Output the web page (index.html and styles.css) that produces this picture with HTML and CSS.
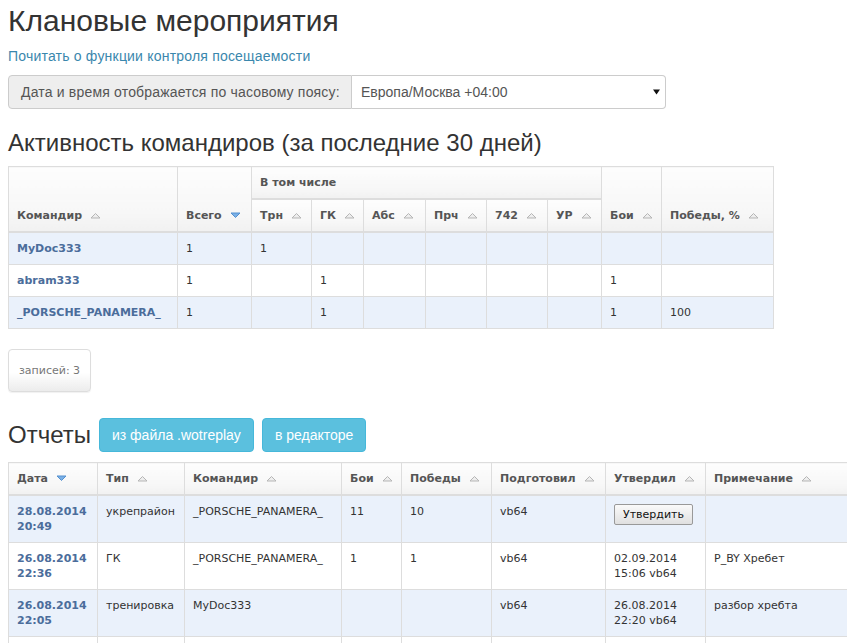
FILE: index.html
```html
<!DOCTYPE html>
<html lang="ru">
<head>
<meta charset="utf-8">
<title>Клановые мероприятия</title>
<link rel="stylesheet" href="styles.css">
</head>
<body>
<h1 class="title">Клановые мероприятия</h1>
<a class="help-link" href="#">Почитать о функции контроля посещаемости</a>

<div class="tz-group">
  <span class="tz-label">Дата и время отображается по часовому поясу:</span>
  <div class="tz-select">
    <span>Европа/Москва +04:00</span>
    <svg class="caret" width="7" height="6" viewBox="0 0 7 6"><path d="M0 0.5 H7 L3.5 5.5 Z" fill="#111"/></svg>
  </div>
</div>

<h2 class="section-title">Активность командиров (за последние 30 дней)</h2>

<table class="grid grid-activity">
  <colgroup>
    <col class="w169"><col class="w74"><col class="w60"><col class="w52"><col class="w62"><col class="w61"><col class="w61"><col class="w54"><col class="w60"><col class="w112">
  </colgroup>
  <thead>
    <tr>
      <th rowspan="2">Командир<svg class="sort" width="11" height="7" viewBox="0 0 11 7"><path d="M1 6 L5.5 1.5 L10 6 Z" fill="#eee" stroke="#b5b5b5"/></svg></th>
      <th rowspan="2">Всего<svg class="sort" width="11" height="7" viewBox="0 0 11 7"><path d="M1 1 L5.5 5.5 L10 1 Z" fill="#7ab0e6" stroke="#5590cf"/></svg></th>
      <th colspan="6" class="group">В том числе</th>
      <th rowspan="2">Бои<svg class="sort" width="11" height="7" viewBox="0 0 11 7"><path d="M1 6 L5.5 1.5 L10 6 Z" fill="#eee" stroke="#b5b5b5"/></svg></th>
      <th rowspan="2">Победы, %<svg class="sort" width="11" height="7" viewBox="0 0 11 7"><path d="M1 6 L5.5 1.5 L10 6 Z" fill="#eee" stroke="#b5b5b5"/></svg></th>
    </tr>
    <tr>
      <th>Трн<svg class="sort" width="11" height="7" viewBox="0 0 11 7"><path d="M1 6 L5.5 1.5 L10 6 Z" fill="#eee" stroke="#b5b5b5"/></svg></th>
      <th>ГК<svg class="sort" width="11" height="7" viewBox="0 0 11 7"><path d="M1 6 L5.5 1.5 L10 6 Z" fill="#eee" stroke="#b5b5b5"/></svg></th>
      <th>Абс<svg class="sort" width="11" height="7" viewBox="0 0 11 7"><path d="M1 6 L5.5 1.5 L10 6 Z" fill="#eee" stroke="#b5b5b5"/></svg></th>
      <th>Прч<svg class="sort" width="11" height="7" viewBox="0 0 11 7"><path d="M1 6 L5.5 1.5 L10 6 Z" fill="#eee" stroke="#b5b5b5"/></svg></th>
      <th>742<svg class="sort" width="11" height="7" viewBox="0 0 11 7"><path d="M1 6 L5.5 1.5 L10 6 Z" fill="#eee" stroke="#b5b5b5"/></svg></th>
      <th>УР<svg class="sort" width="11" height="7" viewBox="0 0 11 7"><path d="M1 6 L5.5 1.5 L10 6 Z" fill="#eee" stroke="#b5b5b5"/></svg></th>
    </tr>
  </thead>
  <tbody>
    <tr>
      <td><a class="cmd" href="#">MyDoc333</a></td><td>1</td><td>1</td><td></td><td></td><td></td><td></td><td></td><td></td><td></td>
    </tr>
    <tr>
      <td><a class="cmd" href="#">abram333</a></td><td>1</td><td></td><td>1</td><td></td><td></td><td></td><td></td><td>1</td><td></td>
    </tr>
    <tr>
      <td><a class="cmd" href="#">_PORSCHE_PANAMERA_</a></td><td>1</td><td></td><td>1</td><td></td><td></td><td></td><td></td><td>1</td><td>100</td>
    </tr>
  </tbody>
</table>

<div class="records-row"><span class="records">записей: 3</span></div>

<div class="reports-head">
  <h2 class="section-title inline">Отчеты</h2>
  <a class="btn" href="#">из файла .wotreplay</a>
  <a class="btn" href="#">в редакторе</a>
</div>

<table class="grid grid-reports">
  <colgroup>
    <col class="w89"><col class="w87"><col class="w157"><col class="w60"><col class="w90"><col class="w114"><col class="w100"><col class="w150">
  </colgroup>
  <thead>
    <tr>
      <th>Дата<svg class="sort" width="11" height="7" viewBox="0 0 11 7"><path d="M1 1 L5.5 5.5 L10 1 Z" fill="#7ab0e6" stroke="#5590cf"/></svg></th>
      <th>Тип<svg class="sort" width="11" height="7" viewBox="0 0 11 7"><path d="M1 6 L5.5 1.5 L10 6 Z" fill="#eee" stroke="#b5b5b5"/></svg></th>
      <th>Командир<svg class="sort" width="11" height="7" viewBox="0 0 11 7"><path d="M1 6 L5.5 1.5 L10 6 Z" fill="#eee" stroke="#b5b5b5"/></svg></th>
      <th>Бои<svg class="sort" width="11" height="7" viewBox="0 0 11 7"><path d="M1 6 L5.5 1.5 L10 6 Z" fill="#eee" stroke="#b5b5b5"/></svg></th>
      <th>Победы<svg class="sort" width="11" height="7" viewBox="0 0 11 7"><path d="M1 6 L5.5 1.5 L10 6 Z" fill="#eee" stroke="#b5b5b5"/></svg></th>
      <th>Подготовил<svg class="sort" width="11" height="7" viewBox="0 0 11 7"><path d="M1 6 L5.5 1.5 L10 6 Z" fill="#eee" stroke="#b5b5b5"/></svg></th>
      <th>Утвердил<svg class="sort" width="11" height="7" viewBox="0 0 11 7"><path d="M1 6 L5.5 1.5 L10 6 Z" fill="#eee" stroke="#b5b5b5"/></svg></th>
      <th>Примечание<svg class="sort" width="11" height="7" viewBox="0 0 11 7"><path d="M1 6 L5.5 1.5 L10 6 Z" fill="#eee" stroke="#b5b5b5"/></svg></th>
    </tr>
  </thead>
  <tbody>
    <tr>
      <td><a class="cmd" href="#">28.08.2014<br>20:49</a></td>
      <td>укрепрайон</td>
      <td>_PORSCHE_PANAMERA_</td>
      <td>11</td>
      <td>10</td>
      <td>vb64</td>
      <td><button class="approve" type="button">Утвердить</button></td>
      <td></td>
    </tr>
    <tr>
      <td><a class="cmd" href="#">26.08.2014<br>22:36</a></td>
      <td>ГК</td>
      <td>_PORSCHE_PANAMERA_</td>
      <td>1</td>
      <td>1</td>
      <td>vb64</td>
      <td>02.09.2014<br>15:06 vb64</td>
      <td>P_BY Хребет</td>
    </tr>
    <tr>
      <td><a class="cmd" href="#">26.08.2014<br>22:05</a></td>
      <td>тренировка</td>
      <td>MyDoc333</td>
      <td></td>
      <td></td>
      <td>vb64</td>
      <td>26.08.2014<br>22:20 vb64</td>
      <td>разбор хребта</td>
    </tr>
    <tr class="tail-row">
      <td></td><td></td><td></td><td></td><td></td><td></td><td></td><td></td>
    </tr>
  </tbody>
</table>
</body>
</html>
```

FILE: styles.css
```css
html {
  overflow: hidden;
}

body {
  margin: 0;
  padding: 0 8px;
  background: #fff;
  color: #333;
  font-family: "Liberation Sans", Arial, sans-serif;
}

.title {
  margin: 4px 0 0;
  font-size: 30px;
  font-weight: normal;
  line-height: 33px;
  color: #333;
}

.help-link {
  display: block;
  margin-top: 9px;
  font-size: 14px;
  line-height: 20px;
  letter-spacing: 0.2px;
  color: #3a87ad;
  text-decoration: none;
}

.tz-group {
  display: flex;
  width: 658px;
  height: 34px;
  margin-top: 9px;
  font-size: 14px;
  color: #555;
}

.tz-label {
  box-sizing: border-box;
  width: 344px;
  padding: 0 12px;
  line-height: 32px;
  letter-spacing: 0.18px;
  background: #eee;
  border: 1px solid #ccc;
  border-radius: 4px 0 0 4px;
  white-space: nowrap;
}

.tz-select {
  flex: 1;
  display: flex;
  align-items: center;
  justify-content: space-between;
  padding: 0 5px 0 9px;
  border: 1px solid #ccc;
  border-left: 0;
  border-radius: 0 4px 4px 0;
  background: #fff;
}

.caret {
  display: block;
}

.section-title {
  margin: 21px 0 10px;
  font-size: 24px;
  font-weight: normal;
  line-height: 26px;
  color: #333;
}

.section-title.inline {
  margin: 0;
}

.grid {
  border-collapse: collapse;
  table-layout: fixed;
  font-family: "DejaVu Sans", Verdana, sans-serif;
  font-size: 11px;
  line-height: 15px;
}

.grid-activity {
  width: 765px;
}

.grid-reports {
  width: 847px;
  margin-top: 10px;
}

.w169 { width: 169px; }
.w74 { width: 74px; }
.w60 { width: 60px; }
.w52 { width: 52px; }
.w62 { width: 62px; }
.w61 { width: 61px; }
.w54 { width: 54px; }
.w112 { width: 112px; }
.w89 { width: 89px; }
.w87 { width: 87px; }
.w157 { width: 157px; }
.w90 { width: 90px; }
.w114 { width: 114px; }
.w100 { width: 100px; }
.w150 { width: 150px; }

.grid th {
  padding: 8px;
  text-align: left;
  vertical-align: bottom;
  font-weight: bold;
  color: #555;
  white-space: nowrap;
  border: 1px solid #ddd;
  border-bottom: 2px solid #ddd;
  background: linear-gradient(#fdfdfd, #f7f7f7 70%, #f1f1f1);
}

.sort {
  margin-left: 8px;
  vertical-align: 0;
}

.grid td {
  padding: 8px;
  vertical-align: top;
  color: #333;
  border: 1px solid #ddd;
  white-space: nowrap;
}

.grid tbody tr:nth-child(odd) td {
  background: #eaf1fb;
}

.grid .tail-row td {
  height: 31px;
}

.cmd {
  font-weight: bold;
  color: #4b6d9b;
  text-decoration: none;
}

.records-row {
  margin-top: 20px;
}

.records {
  display: inline-block;
  padding: 13px 10px;
  font-family: "DejaVu Sans", Verdana, sans-serif;
  font-size: 11px;
  line-height: 15px;
  color: #777;
  border: 1px solid #ddd;
  border-radius: 4px;
  background: linear-gradient(#fff 55%, #ececec);
  box-shadow: 0 1px 1px rgba(0, 0, 0, 0.06);
}

.reports-head {
  display: flex;
  align-items: center;
  gap: 8px;
  margin-top: 26px;
}

.btn {
  display: inline-block;
  padding: 6px 12px;
  font-size: 14px;
  line-height: 20px;
  color: #fff;
  text-decoration: none;
  background: #5bc0de;
  border: 1px solid #46b8da;
  border-radius: 4px;
}

.approve {
  height: 21px;
  padding: 0 8px;
  font-family: "DejaVu Sans", Verdana, sans-serif;
  font-size: 11px;
  color: #111;
  border: 1px solid #999;
  border-radius: 2px;
  background: linear-gradient(#fafafa, #e0e0e0);
}
```
